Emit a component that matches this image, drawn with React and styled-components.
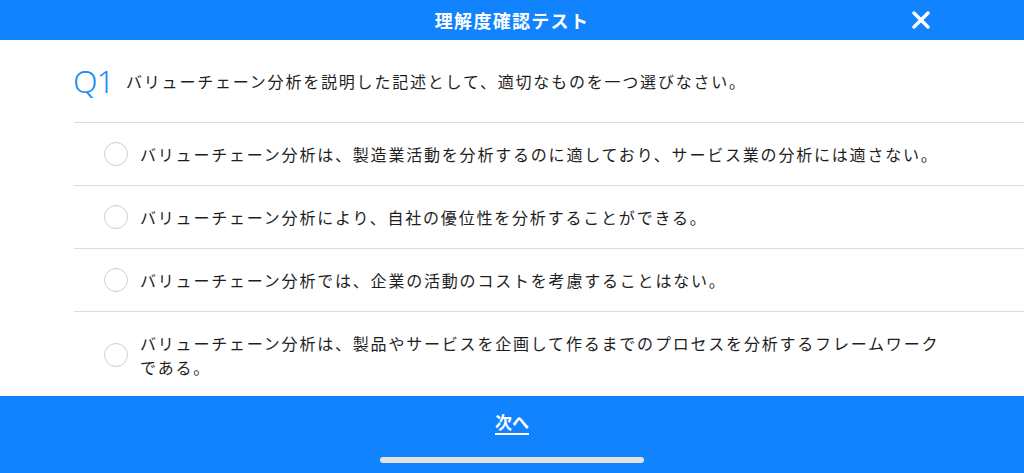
import React from 'react'
import styled, { createGlobalStyle } from 'styled-components'

const GlobalStyle = createGlobalStyle`
  html, body {
    margin: 0;
    padding: 0;
    background: #fff;
  }
  body {
    font-family: "Noto Sans CJK JP", "Noto Sans", sans-serif;
    color: #1e1e1e;
  }
`

const Screen = styled.div`
  height: 100vh;
  display: flex;
  flex-direction: column;
  overflow: hidden;
`

const Header = styled.header`
  position: relative;
  flex: 0 0 40px;
  background-color: #1283fe;
  display: flex;
  align-items: center;
  justify-content: center;
`

const Title = styled.h1`
  margin: 0;
  color: #fff;
  font-size: 18px;
  font-weight: 700;
  letter-spacing: 1.3px;
`

const CloseButton = styled.button`
  position: absolute;
  right: 94px;
  top: 11px;
  width: 18px;
  height: 18px;
  padding: 0;
  border: 0;
  background: none;
  display: flex;
`

const Body = styled.main`
  flex: 1 1 auto;
  overflow: hidden;
`

const QuestionLine = styled.div`
  display: flex;
  align-items: center;
  padding: 26px 0 26px 73px;
  height: 30px;
`

const QNumber = styled.span`
  font-family: "Noto Sans", "Open Sans", sans-serif;
  font-size: 32px;
  font-weight: 300;
  color: #1b8df6;
  width: 53px;
  line-height: 30px;
  letter-spacing: -1px;
`

const QText = styled.p`
  margin: 0;
  font-size: 16px;
  letter-spacing: 1.8px;
  line-height: 24px;
`

const Choices = styled.ul`
  list-style: none;
  margin: 0 0 0 74px;
  padding: 0;
`

const Choice = styled.li`
  display: flex;
  align-items: center;
  gap: 12px;
  padding: 19px 0 19px 30px;
  border-top: 1px solid #dcdcdc;
`

const Radio = styled.span`
  flex: 0 0 auto;
  width: 22px;
  height: 22px;
  border-radius: 50%;
  border: 1.5px solid #cfcfcf;
`

const ChoiceText = styled.span`
  max-width: 810px;
  font-size: 16px;
  letter-spacing: 1.8px;
  line-height: 24px;
`

const Footer = styled.footer`
  flex: 0 0 77px;
  background-color: #1283fe;
  display: flex;
  flex-direction: column;
  align-items: center;
`

const NextLink = styled.a`
  margin-top: 13px;
  color: #fff;
  font-size: 17px;
  font-weight: 700;
  line-height: 26px;
  text-decoration: underline;
  text-underline-offset: 4px;
  text-decoration-thickness: 1.5px;
`

const HomeBar = styled.div`
  margin-top: 22px;
  width: 264px;
  height: 6px;
  border-radius: 3px;
  background-color: #e3e3e3;
`

const choices = [
  'バリューチェーン分析は、製造業活動を分析するのに適しており、サービス業の分析には適さない。',
  'バリューチェーン分析により、自社の優位性を分析することができる。',
  'バリューチェーン分析では、企業の活動のコストを考慮することはない。',
  'バリューチェーン分析は、製品やサービスを企画して作るまでのプロセスを分析するフレームワークである。',
]

export default function App() {
  return (
    <Screen>
      <GlobalStyle />
      <Header>
        <Title>理解度確認テスト</Title>
        <CloseButton aria-label="close">
          <svg width="18" height="18" viewBox="0 0 18 18">
            <path d="M2 2 L16 16 M16 2 L2 16" stroke="#fff" strokeWidth="3.4" strokeLinecap="round" />
          </svg>
        </CloseButton>
      </Header>
      <Body>
        <QuestionLine>
          <QNumber>Q1</QNumber>
          <QText>バリューチェーン分析を説明した記述として、適切なものを一つ選びなさい。</QText>
        </QuestionLine>
        <Choices>
          {choices.map(text => (
            <Choice key={text}>
              <Radio />
              <ChoiceText>{text}</ChoiceText>
            </Choice>
          ))}
        </Choices>
      </Body>
      <Footer>
        <NextLink>次へ</NextLink>
        <HomeBar />
      </Footer>
    </Screen>
  )
}
